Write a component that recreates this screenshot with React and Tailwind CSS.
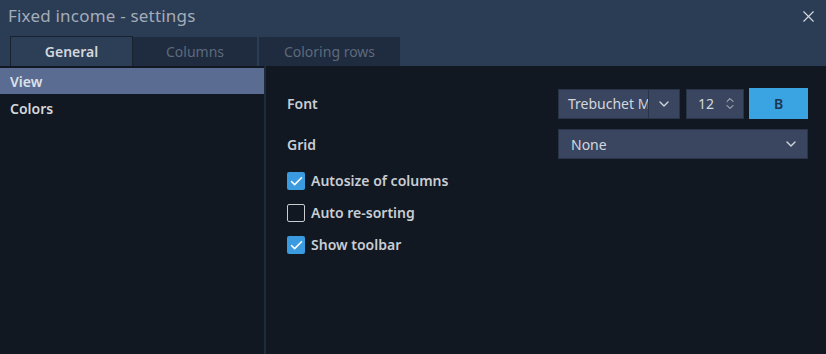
import { Check, ChevronDown, ChevronUp, X } from 'lucide-react';

const FONT = { fontFamily: '"Noto Sans", "DejaVu Sans", sans-serif' };

function Checkbox({ checked, label }) {
  return (
    <div className="flex items-center h-[18px]">
      {checked ? (
        <div className="w-[18px] h-[18px] rounded-[2px] bg-[#3b9be0] flex items-center justify-center">
          <Check size={15} strokeWidth={2.5} className="text-white" />
        </div>
      ) : (
        <div className="w-[18px] h-[18px] rounded-[2px] border border-[#c9ccd1] bg-transparent" />
      )}
      <span className="ml-[6px] text-[14px] font-semibold text-[#c9cdd3] leading-none">{label}</span>
    </div>
  );
}

export default function App() {
  return (
    <div className="w-[826px] h-[354px] bg-[#111822] flex flex-col overflow-hidden" style={FONT}>
      {/* header */}
      <div className="h-[66px] bg-[#2b3c55] flex flex-col shrink-0">
        <div className="h-[36px] flex items-start justify-between pl-[8px] pr-[8px] pt-[3px]">
          <span className="text-[17px] text-[#a3acb8] tracking-[0.2px]">Fixed income - settings</span>
          <X size={19} strokeWidth={1.4} className="text-[#d7dbe0] mt-[4px]" />
        </div>
        <div className="flex pl-[10px] h-[30px] items-end">
          <div className="w-[123px] h-[30px] bg-[#2d3e57] border border-b-0 border-[#19222f] flex items-center justify-center text-[14px] font-semibold text-[#d3d7dd]">
            General
          </div>
          <div className="w-[124px] h-[29px] bg-[#1f2b3e] flex items-center justify-center text-[14px] text-[#5d6a7d]">
            Columns
          </div>
          <div className="w-[141px] h-[29px] ml-[2px] bg-[#1f2b3e] flex items-center justify-center text-[14px] text-[#5d6a7d]">
            Coloring rows
          </div>
        </div>
      </div>

      {/* body */}
      <div className="flex flex-1 min-h-0">
        <div className="w-[266px] border-r-2 border-[#1e2a3b] pt-[2px] shrink-0">
          <div className="h-[26px] bg-[#5a6c91] flex items-center pl-[10px] text-[14px] font-semibold text-[#dce1e9]">View</div>
          <div className="h-[28px] flex items-center pl-[10px] text-[14px] font-semibold text-[#d4d7dc]">Colors</div>
        </div>

        <div className="flex-1 pl-[21px] pr-[18px] pt-[22px]">
          <div className="flex items-center h-[31px]">
            <span className="w-[271px] text-[14px] font-semibold text-[#c9cdd3]">Font</span>
            <div className="flex h-[30px] bg-[#3a4660] border border-[#2a3448]">
              <div className="w-[89px] flex items-center pl-[9px] overflow-hidden whitespace-nowrap text-[14px] text-[#d3d7dd]">Trebuchet MS</div>
              <div className="w-[31px] border-l border-[#2a3448] flex items-center justify-center">
                <ChevronDown size={16} strokeWidth={2} className="text-[#d3d7dd]" />
              </div>
            </div>
            <div className="ml-[6px] w-[58px] h-[30px] bg-[#3a4660] border border-[#2a3448] flex items-center pl-[11px] text-[14px] text-[#d3d7dd]">
              <span>12</span>
              <div className="ml-[10px] flex flex-col items-center -space-y-[5px]">
                <ChevronUp size={12} strokeWidth={2} className="text-[#d3d7dd]" />
                <ChevronDown size={12} strokeWidth={2} className="text-[#d3d7dd]" />
              </div>
            </div>
            <div className="ml-[5px] w-[59px] h-[31px] bg-[#3aa3e2] flex items-center justify-center text-[14px] text-[#1d3650] font-semibold">B</div>
          </div>

          <div className="flex items-center h-[30px] mt-[10px]">
            <span className="w-[271px] text-[14px] font-semibold text-[#c9cdd3]">Grid</span>
            <div className="w-[250px] h-[30px] bg-[#3a4660] border border-[#2a3448] flex items-center justify-between pl-[12px] pr-[8px] text-[14px] text-[#d3d7dd]">
              <span>None</span>
              <ChevronDown size={16} strokeWidth={2} className="text-[#d3d7dd]" />
            </div>
          </div>

          <div className="flex flex-col gap-[14px] mt-[13px]">
            <Checkbox checked label="Autosize of columns" />
            <Checkbox label="Auto re-sorting" />
            <Checkbox checked label="Show toolbar" />
          </div>
        </div>
      </div>
    </div>
  );
}
